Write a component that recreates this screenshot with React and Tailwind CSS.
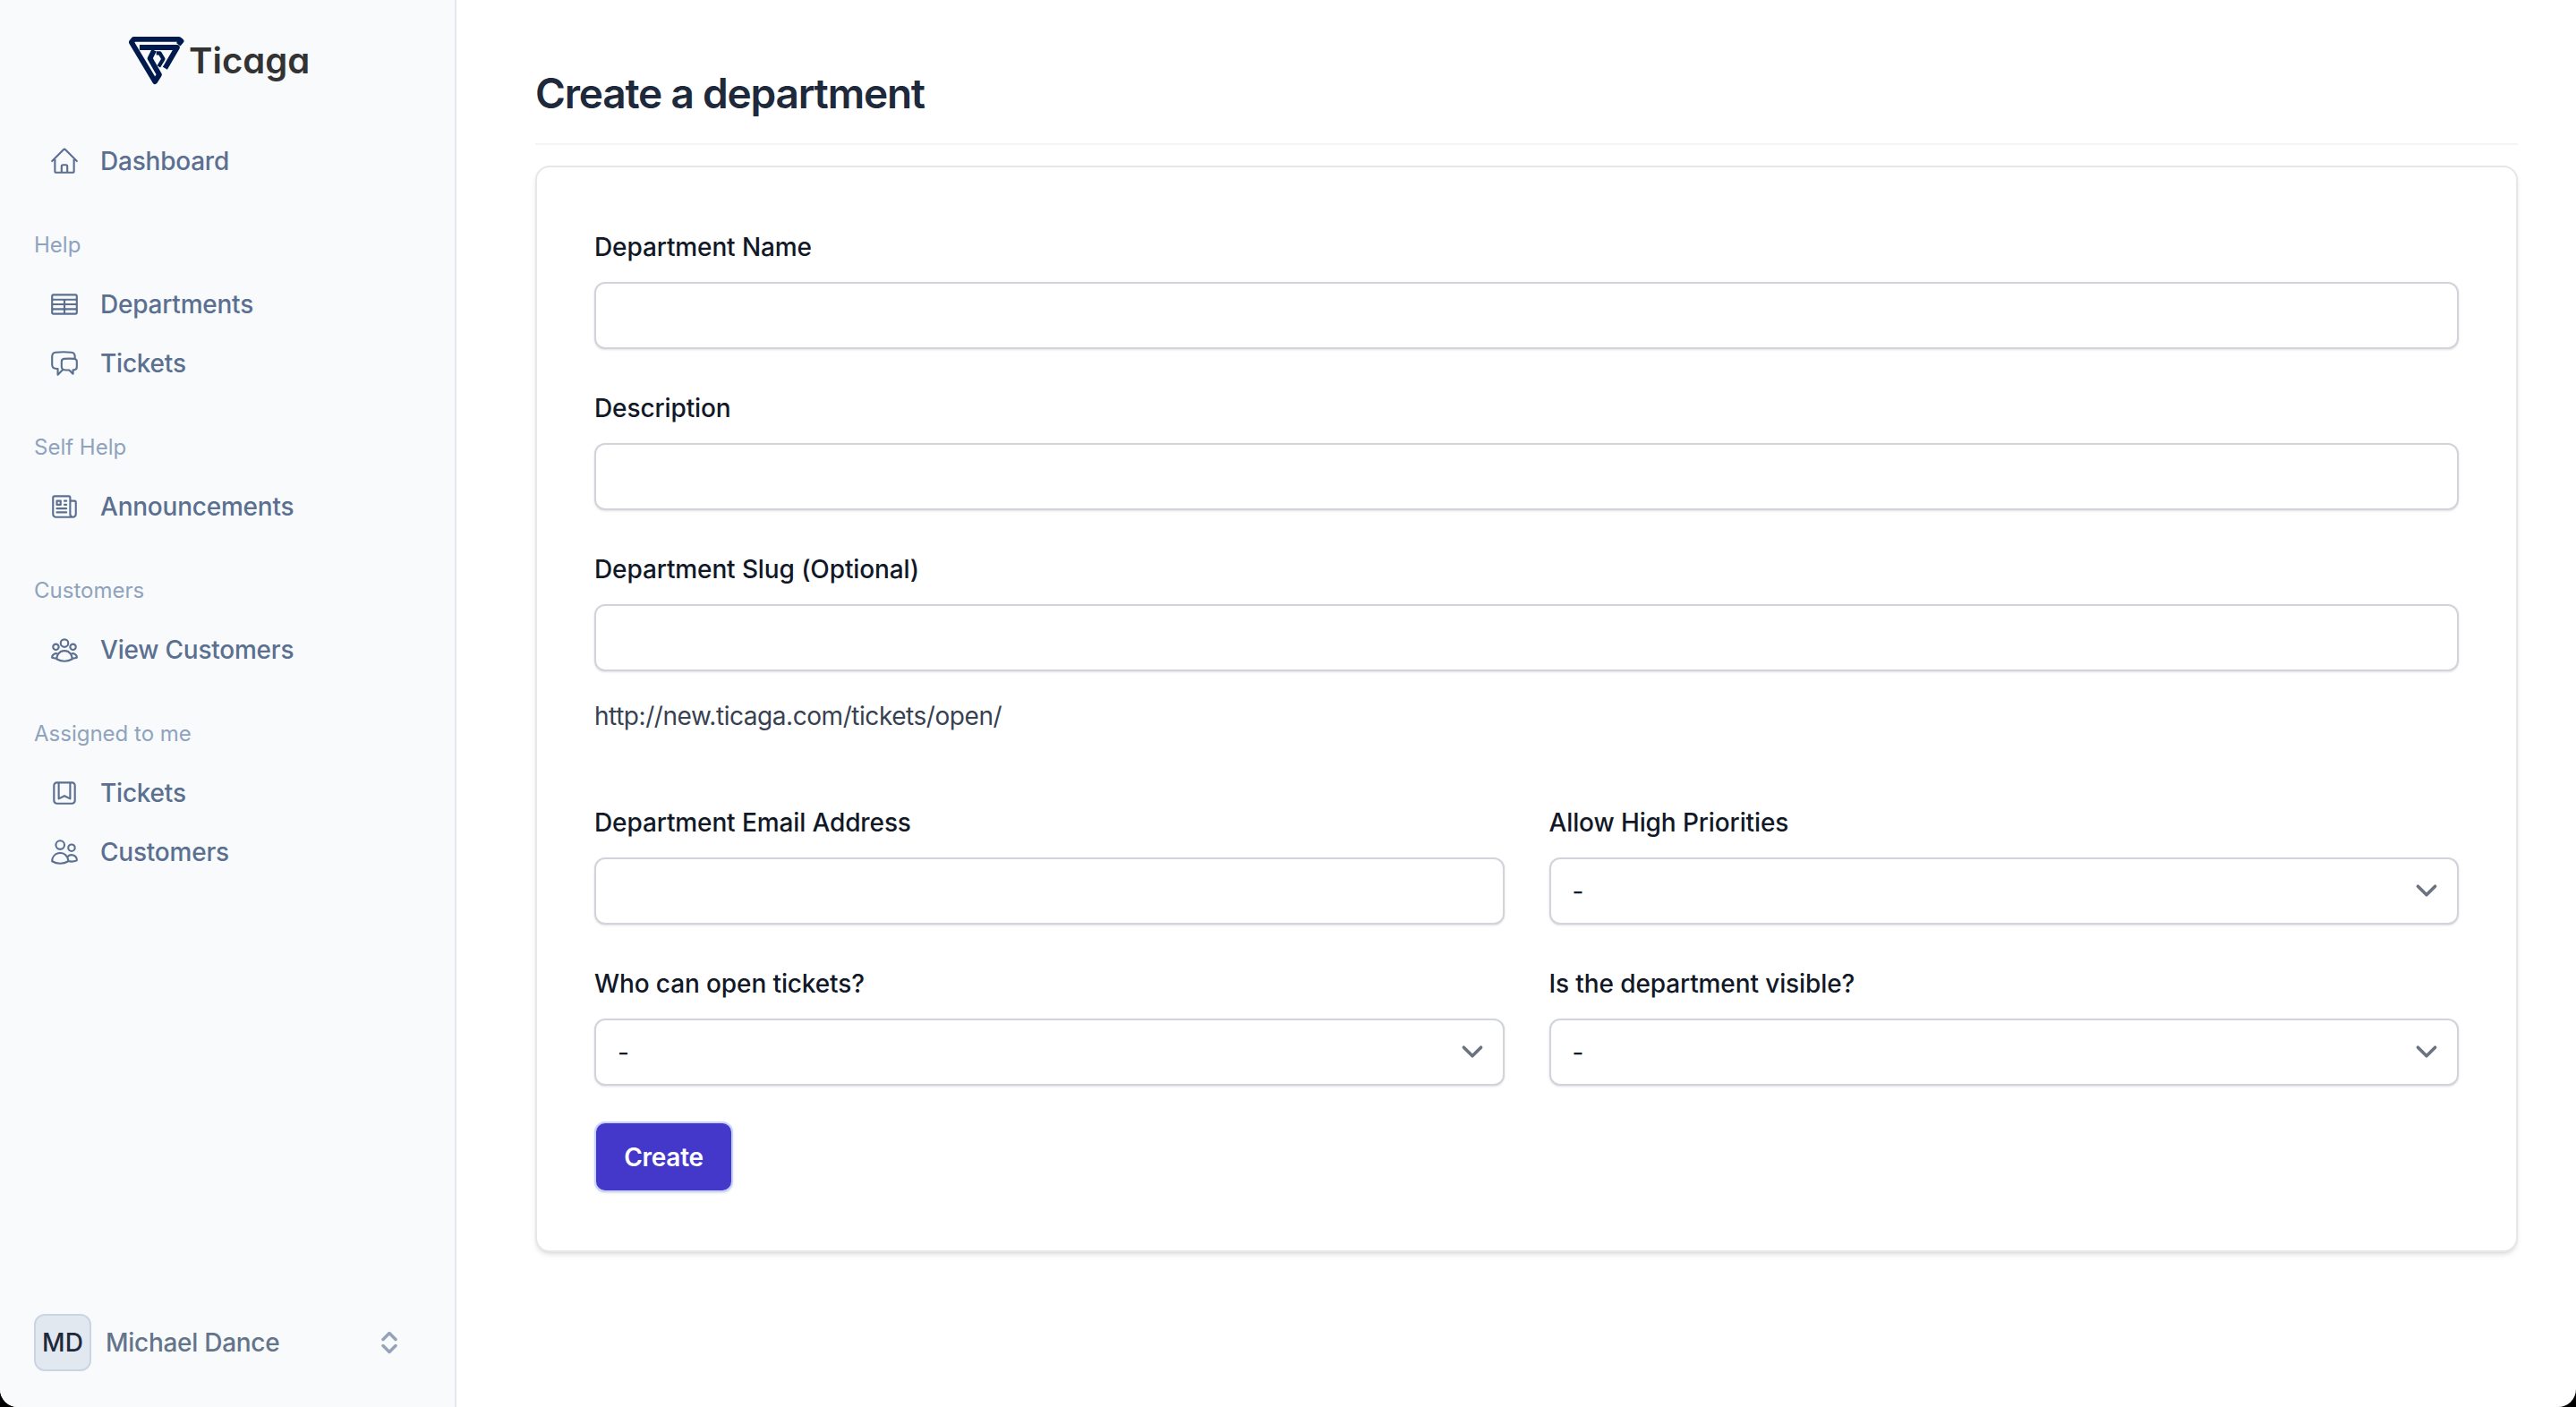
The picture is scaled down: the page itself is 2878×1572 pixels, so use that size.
import {
  HiOutlineHome,
  HiOutlineTableCells,
  HiOutlineChatBubbleLeftRight,
  HiOutlineNewspaper,
  HiOutlineUserGroup,
  HiOutlineBookmarkSquare,
  HiOutlineUsers,
} from "react-icons/hi2";

const NavItem = ({ icon: Icon, label }) => (
  <a className="flex items-center gap-[23px] h-[66px] pl-[17px] text-[28px] leading-10 font-medium tracking-[-0.008em] text-[#5b7090]">
    <Icon className="w-[34px] h-[34px] shrink-0" />
    {label}
  </a>
);

const NavLabel = ({ children }) => (
  <p className="h-[66px] flex items-center text-2xl text-[#8fa3bd]">{children}</p>
);

const Logo = () => (
  <div className="flex items-center h-[62px] ml-[106px]">
    <svg viewBox="15 16 195 165" className="w-[63px] h-[54px]" fill="none">
      <g stroke="#001a4d" strokeWidth="18" strokeLinejoin="round">
        <path d="M186 42 196 30 188 24 32 24 24 34 105 170 120 146 88 90 102 62" />
        <path d="M52 52H182L140 124" />
        <path d="M118 118 134 92 122 72H110" strokeWidth="13" />
      </g>
    </svg>
    <span className="ml-1 text-[40px] leading-none font-semibold text-[#333333] [font-feature-settings:'cv11']">
      Ticaga
    </span>
  </div>
);

const Sidebar = () => (
  <aside className="w-[510px] shrink-0 h-full flex flex-col bg-[#f8fafc] border-r-2 border-[#e2e8f0] px-[38px] pt-[37px] pb-10">
    <Logo />
    <nav className="flex-1 mt-12">
      <NavItem icon={HiOutlineHome} label="Dashboard" />
      <div className="mt-7">
        <NavLabel>Help</NavLabel>
        <NavItem icon={HiOutlineTableCells} label="Departments" />
        <NavItem icon={HiOutlineChatBubbleLeftRight} label="Tickets" />
      </div>
      <div className="mt-7">
        <NavLabel>Self Help</NavLabel>
        <NavItem icon={HiOutlineNewspaper} label="Announcements" />
      </div>
      <div className="mt-7">
        <NavLabel>Customers</NavLabel>
        <NavItem icon={HiOutlineUserGroup} label="View Customers" />
      </div>
      <div className="mt-7">
        <NavLabel>Assigned to me</NavLabel>
        <NavItem icon={HiOutlineBookmarkSquare} label="Tickets" />
        <NavItem icon={HiOutlineUsers} label="Customers" />
      </div>
    </nav>
    <div className="flex items-center">
      <div className="w-16 h-16 flex items-center justify-center rounded-xl bg-[#e2e8f0] border-2 border-[#cbd5e1] text-[28px] font-medium text-[#1e293b]">
        MD
      </div>
      <span className="ml-4 text-[28px] font-medium tracking-[-0.01em] text-[#64748b]">Michael Dance</span>
      <svg viewBox="0 0 18 26" fill="none" className="ml-auto mr-[26px] w-[18px] h-[26px]">
        <path
          d="M2 9.5 9 2.5l7 7M2 16.5l7 7 7-7"
          stroke="#94a3b8"
          strokeWidth="3.5"
          strokeLinecap="round"
          strokeLinejoin="round"
        />
      </svg>
    </div>
  </aside>
);

const Label = ({ children }) => (
  <label className="block mb-[19px] text-[28px] leading-10 font-medium tracking-[-0.004em] text-[#111827]">
    {children}
  </label>
);

const fieldClass =
  "block w-full h-[75px] px-6 bg-white border-2 border-[#d1d5db] rounded-xl shadow-sm text-[28px] text-[#111827]";

const TextField = ({ label }) => (
  <div>
    <Label>{label}</Label>
    <input type="text" className={fieldClass} />
  </div>
);

const SelectField = ({ label }) => (
  <div>
    <Label>{label}</Label>
    <div className="relative">
      <select className={`${fieldClass} appearance-none`}>
        <option>-</option>
      </select>
      <svg
        viewBox="0 0 20 20"
        fill="none"
        className="absolute right-3 top-[13px] w-12 h-12 pointer-events-none"
      >
        <path d="M6 8l4 4 4-4" stroke="#6b7280" strokeWidth="1.5" strokeLinecap="round" strokeLinejoin="round" />
      </svg>
    </div>
  </div>
);

const App = () => (
  <div className="h-screen bg-black font-['Inter',sans-serif]">
    <div className="h-full flex bg-white rounded-b-[20px] overflow-hidden">
      <Sidebar />
      <main className="flex-1 pl-[88px] pr-[65px]">
        <div className="pt-[76px] pb-[28px] border-b-2 border-[#f3f4f6]">
          <h1 className="text-[46px] leading-[56px] font-semibold tracking-[-0.026em] text-[#1e293b]">
            Create a department
          </h1>
        </div>
        <div className="mt-[23px] h-[1214px] border-2 border-[#e5e7eb] rounded-2xl shadow-md bg-white px-16 pt-[69px]">
          <div className="flex flex-col gap-[46px]">
            <TextField label="Department Name" />
            <TextField label="Description" />
            <div>
              <TextField label="Department Slug (Optional)" />
              <p className="mt-[30px] text-[28px] leading-10 tracking-[-0.016em] text-[#374151]">
                http://new.ticaga.com/tickets/open/
              </p>
            </div>
          </div>
          <div className="mt-[79px] grid grid-cols-2 gap-x-[50px] gap-y-[46px]">
            <TextField label="Department Email Address" />
            <SelectField label="Allow High Priorities" />
            <SelectField label="Who can open tickets?" />
            <SelectField label="Is the department visible?" />
          </div>
          <button className="mt-[40px] h-[79px] w-[155px] bg-[#4338ca] rounded-xl border-2 border-[#c7d2fe] shadow-sm text-[28px] font-semibold tracking-[-0.01em] text-white">
            Create
          </button>
        </div>
      </main>
    </div>
  </div>
);

export default App;
